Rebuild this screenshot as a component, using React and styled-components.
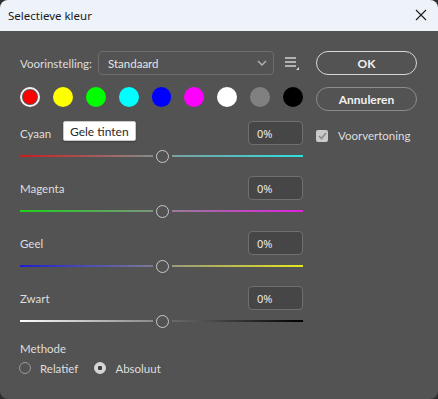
import styled, { createGlobalStyle } from "styled-components";

const GlobalStyle = createGlobalStyle`
  html, body {
    margin: 0;
    padding: 0;
    background: #2e2e2e;
  }
  * { box-sizing: border-box; }
`;

const Window = styled.div`
  width: 438px;
  height: 399px;
  display: flex;
  flex-direction: column;
  background: #535353;
  border-radius: 8px;
  overflow: hidden;
  font-family: "Lato", "Noto Sans", sans-serif;
  font-size: 11.5px;
  color: #e3e3e3;
`;

const TitleBar = styled.div`
  height: 31px;
  flex: none;
  display: flex;
  align-items: center;
  justify-content: space-between;
  padding: 0 8px 1px 8px;
  background: #eef2f9;
  color: #1b1b1b;
  font-family: "Noto Sans", "Open Sans", sans-serif;
  font-size: 11.5px;
`;

const CloseButton = styled.div`
  width: 30px;
  height: 30px;
  display: flex;
  align-items: center;
  justify-content: center;
  margin-right: -6px;
`;

const Body = styled.div`
  display: grid;
  grid-template-columns: 283px 101px;
  column-gap: 13px;
  padding: 20px 0 0 20px;
`;

const LeftColumn = styled.div`
  display: flex;
  flex-direction: column;
`;

const RightColumn = styled.div`
  display: flex;
  flex-direction: column;
`;

const PresetRow = styled.div`
  height: 24px;
  display: flex;
  align-items: center;
`;

const Label = styled.span`
  color: #dedede;
  white-space: nowrap;
`;

const PresetLabel = styled(Label)`
  width: 78px;
  flex: none;
`;

const Select = styled.div`
  width: 176px;
  height: 24px;
  border: 1px solid #6e6e6e;
  border-radius: 4px;
  display: flex;
  align-items: center;
  justify-content: space-between;
  padding: 0 6px 0 9px;
  color: #e6e6e6;
`;

const MenuIcon = styled.div`
  margin-left: 11px;
  display: flex;
`;

const Swatches = styled.div`
  margin-top: 12px;
  height: 20px;
  display: flex;
  gap: 13px;
`;

const Swatch = styled.div`
  width: 20px;
  height: 20px;
  border-radius: 50%;
  background: ${(p) => p.$color};
  box-shadow: ${(p) =>
    p.$selected ? `inset 0 0 0 2px #f2f2f2, inset 0 0 0 3px #535353` : "none"};
`;

const Channels = styled.div`
  margin-top: 13px;
  display: flex;
  flex-direction: column;
  gap: 12px;
`;

const Channel = styled.div`
  display: flex;
  flex-direction: column;
  gap: 5px;
`;

const ChannelHeader = styled.div`
  position: relative;
  height: 24px;
  display: flex;
  align-items: center;
  justify-content: space-between;
  padding-top: 2px;
`;

const ValueInput = styled.div`
  width: 55px;
  height: 24px;
  border: 1px solid #6f6f6f;
  border-radius: 4px;
  background: #464646;
  display: flex;
  align-items: center;
  padding-left: 8px;
  color: #eaeaea;
  font-family: "Noto Sans", sans-serif;
  font-size: 11px;
`;

const Tooltip = styled.div`
  position: absolute;
  left: 43px;
  top: 1px;
  height: 20px;
  padding: 0 6px;
  display: flex;
  align-items: center;
  background: #ffffff;
  border: 1px solid #c9c9c9;
  border-radius: 2px;
  color: #2a2a2a;
  font-size: 12px;
  box-shadow: 0 1px 2px rgba(0, 0, 0, 0.25);
`;

const SliderRow = styled.div`
  height: 14px;
  display: flex;
  align-items: center;
`;

const Track = styled.div`
  height: 2px;
  background: linear-gradient(to right, ${(p) => p.$from}, ${(p) => p.$to});
`;

const LeftTrack = styled(Track)`
  width: 133px;
`;

const RightTrack = styled(Track)`
  flex: 1;
`;

const Thumb = styled.div`
  width: 13px;
  height: 13px;
  margin: 0 3px;
  border-radius: 50%;
  border: 1.5px solid #c9c9c9;
  flex: none;
`;

const MethodSection = styled.div`
  margin-top: 14px;
  display: flex;
  flex-direction: column;
  gap: 6px;
`;

const RadioRow = styled.div`
  display: flex;
  align-items: center;
  height: 14px;
`;

const RadioOption = styled.div`
  display: flex;
  align-items: center;
  gap: 9px;
  margin-right: 16px;
`;

const Radio = styled.div`
  width: 12px;
  height: 12px;
  border-radius: 50%;
  border: 1px solid ${(p) => (p.$checked ? "#d6d6d6" : "#9a9a9a")};
  background: ${(p) =>
    p.$checked ? "radial-gradient(circle, #3e3e3e 0 2px, #d6d6d6 2.5px)" : "transparent"};
  margin-left: ${(p) => (p.$first ? "-1px" : "0")};
`;

const PillButton = styled.div`
  height: 24px;
  border-radius: 12px;
  border: 1px solid ${(p) => (p.$primary ? "#d8d8d8" : "#8c8c8c")};
  display: flex;
  align-items: center;
  justify-content: center;
  color: #f0f0f0;
  font-weight: 700;
  font-size: 12px;
  margin-bottom: 12px;
`;

const PreviewRow = styled.div`
  margin-top: 6px;
  display: flex;
  align-items: center;
  gap: 10px;
`;

const Checkbox = styled.div`
  width: 12px;
  height: 12px;
  border-radius: 2px;
  background: #cacaca;
  display: flex;
  align-items: center;
  justify-content: center;
`;

const swatches = [
  "#ff0000",
  "#ffff00",
  "#00ff00",
  "#00ffff",
  "#0000ff",
  "#ff00ff",
  "#ffffff",
  "#808080",
  "#000000",
];

const channels = [
  { name: "Cyaan", from: "#c81e1e", mid: "#8a8a8a", to: "#2ee0e0", midR: "#7aa0a0" },
  { name: "Magenta", from: "#1ed21e", mid: "#7a947a", to: "#e020e0", midR: "#9a7a9a" },
  { name: "Geel", from: "#1e1ed2", mid: "#7a7a94", to: "#e6e61e", midR: "#9a9a7a" },
  { name: "Zwart", from: "#ffffff", mid: "#8a8a8a", to: "#000000", midR: "#6a6a6a" },
];

function App() {
  return (
    <>
      <GlobalStyle />
      <Window>
        <TitleBar>
          <span>Selectieve kleur</span>
          <CloseButton>
            <svg width="12" height="12" viewBox="0 0 12 12">
              <path d="M1 1L11 11M11 1L1 11" stroke="#1b1b1b" strokeWidth="1.1" />
            </svg>
          </CloseButton>
        </TitleBar>
        <Body>
          <LeftColumn>
            <PresetRow>
              <PresetLabel>Voorinstelling:</PresetLabel>
              <Select>
                <span>Standaard</span>
                <svg width="10" height="6" viewBox="0 0 10 6">
                  <path d="M1 1l4 4 4-4" stroke="#b4b4b4" strokeWidth="1.4" fill="none" />
                </svg>
              </Select>
              <MenuIcon>
                <svg width="14" height="14" viewBox="0 0 14 14">
                  <path d="M0 2h11M0 6h11M0 10h11" stroke="#d2d2d2" strokeWidth="1.4" />
                  <path d="M14 11v3h-3z" fill="#d2d2d2" />
                </svg>
              </MenuIcon>
            </PresetRow>
            <Swatches>
              {swatches.map((c, i) => (
                <Swatch key={c} $color={c} $selected={i === 0} />
              ))}
            </Swatches>
            <Channels>
              {channels.map((ch, i) => (
                <Channel key={ch.name}>
                  <ChannelHeader>
                    <Label>{ch.name}</Label>
                    {i === 0 && <Tooltip>Gele tinten</Tooltip>}
                    <ValueInput>0%</ValueInput>
                  </ChannelHeader>
                  <SliderRow>
                    <LeftTrack $from={ch.from} $to={ch.mid} />
                    <Thumb />
                    <RightTrack $from={ch.midR} $to={ch.to} />
                  </SliderRow>
                </Channel>
              ))}
            </Channels>
            <MethodSection>
              <Label>Methode</Label>
              <RadioRow>
                <RadioOption>
                  <Radio $first />
                  <Label>Relatief</Label>
                </RadioOption>
                <RadioOption>
                  <Radio $checked />
                  <Label>Absoluut</Label>
                </RadioOption>
              </RadioRow>
            </MethodSection>
          </LeftColumn>
          <RightColumn>
            <PillButton $primary>OK</PillButton>
            <PillButton>Annuleren</PillButton>
            <PreviewRow>
              <Checkbox>
                <svg width="9" height="8" viewBox="0 0 9 8">
                  <path d="M1 4l2.5 2.5L8 1" stroke="#8a8a8a" strokeWidth="1.6" fill="none" />
                </svg>
              </Checkbox>
              <Label>Voorvertoning</Label>
            </PreviewRow>
          </RightColumn>
        </Body>
      </Window>
    </>
  );
}

export default App;
